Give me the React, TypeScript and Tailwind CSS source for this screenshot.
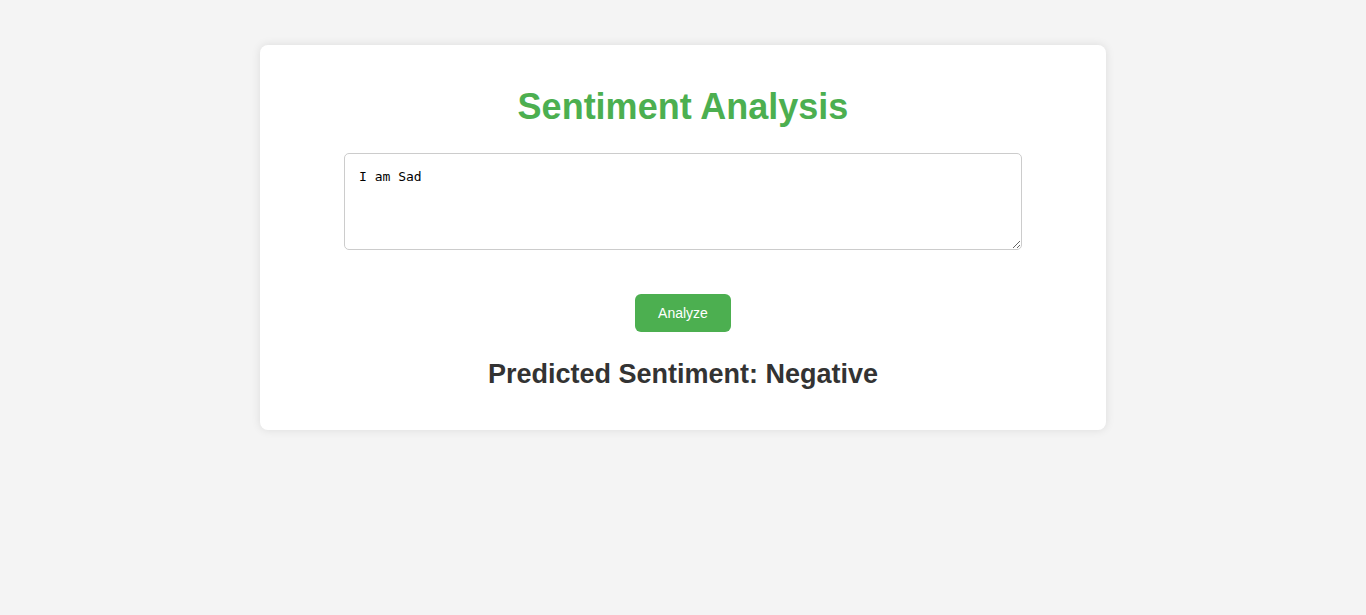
import { useState } from 'react';

export default function App() {
  const [text, setText] = useState('I am Sad');

  return (
    <div className="min-h-[615px] bg-[#f4f4f4] pt-[45px] font-['Liberation_Sans',Arial,sans-serif]">
      <div className="mx-auto flex w-[846px] flex-col items-center rounded-lg bg-white px-5 pb-[40px] pt-[20px] shadow-[0_0_10px_rgba(0,0,0,0.1)]">
        <h1 className="mt-[21px] mb-[25px] text-[36px] font-bold leading-[42px] text-[#4caf50]">
          Sentiment Analysis
        </h1>
        <textarea
          className="h-[97px] w-[678px] resize-y rounded-[5px] border border-[#ccc] px-[14px] pt-[15px] pb-[14px] font-['DejaVu_Sans_Mono',monospace] text-[13px] leading-[15px] text-black focus:outline-none"
          value={text}
          onChange={(e) => setText(e.target.value)}
        />
        <button
          type="button"
          className="mt-[44px] h-[38px] w-[96px] rounded-md bg-[#4caf50] text-[14px] text-white"
        >
          Analyze
        </button>
        <h2 className="mt-[26px] text-[27px] font-bold leading-[32px] text-[#333]">
          Predicted Sentiment: Negative
        </h2>
      </div>
    </div>
  );
}
